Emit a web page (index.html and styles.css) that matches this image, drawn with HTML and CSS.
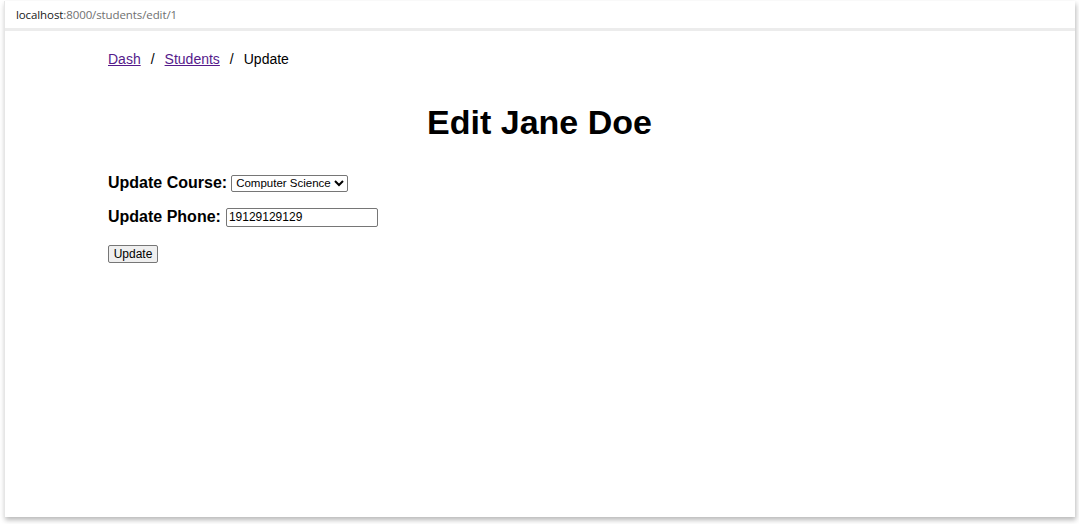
FILE: index.html
```html
<!DOCTYPE html>
<html>
<head>
<meta charset="utf-8">
<title>Edit Jane Doe</title>
<link rel="stylesheet" href="styles.css">
</head>
<body>
<div class="window">
  <div class="addressbar"><span class="host">localhost</span><span class="path">:8000/students/edit/1</span></div>
  <div class="page">
    <nav class="breadcrumb">
      <a href="#" class="crumb-link">Dash</a>
      <span class="sep">/</span>
      <a href="#" class="crumb-link">Students</a>
      <span class="sep">/</span>
      <span class="crumb-current">Update</span>
    </nav>
    <h1 class="title">Edit Jane Doe</h1>
    <form class="form">
      <div class="row"><label class="label" for="course">Update Course:</label> <select id="course" class="select"><option>Computer Science</option></select></div>
      <div class="row row-phone"><label class="label" for="phone">Update Phone:</label> <input id="phone" class="input" type="text" value="19129129129"></div>
      <div class="row row-btn"><button type="button" class="btn">Update</button></div>
    </form>
  </div>
</div>
</body>
</html>
```
FILE: styles.css
```css
html, body {
  margin: 0;
  padding: 0;
  background: #ffffff;
}
body {
  padding: 1px 4px 0 4px;
  height: 524px;
  box-sizing: border-box;
  font-family: "Liberation Sans", Arial, sans-serif;
}
.window {
  width: 1071px;
  height: 516px;
  background: #ffffff;
  box-shadow: 1px 3px 5px rgba(0, 0, 0, 0.28);
  border-left: 1px solid #e6e6e6;
  box-sizing: border-box;
  overflow: hidden;
}
.addressbar {
  height: 30px;
  box-sizing: border-box;
  padding: 7px 0 0 11px;
  font-family: "Open Sans", "Noto Sans", sans-serif;
  font-size: 11.5px;
  line-height: 14px;
  border-bottom: 3px solid #ececec;
  letter-spacing: -0.1px;
}
.host { color: #202020; }
.path { color: #707070; }
.page {
  padding: 20px 104px 0 103px;
}
.breadcrumb {
  display: flex;
  gap: 10px;
  font-size: 14px;
  line-height: 16px;
  color: #000;
}
.crumb-link { color: #551a8b; text-decoration: underline; }
.title {
  margin: 36px 0 0 0;
  text-align: center;
  font-size: 34px;
  line-height: 39px;
  font-weight: bold;
  color: #000;
}
.form {
  margin-top: 31px;
}
.row {
  height: 20px;
  display: flex;
  align-items: center;
  gap: 4px;
}
.row-phone { margin-top: 14px; gap: 5px; }
.row-btn { margin-top: 17px; }
.label {
  font-size: 16px;
  font-weight: bold;
  color: #000;
}
.select {
  font-family: "Liberation Sans", Arial, sans-serif;
  font-size: 11.5px;
  height: 17px;
  border: 1px solid #767676;
  border-radius: 2px;
  background: #fff;
  color: #000;
  padding: 0;
}
.input {
  font-family: "Liberation Sans", Arial, sans-serif;
  font-size: 12px;
  width: 152px;
  height: 19px;
  box-sizing: border-box;
  border: 1px solid #767676;
  border-radius: 2px;
  padding: 1px 2px;
  color: #000;
}
.btn {
  font-family: "Liberation Sans", Arial, sans-serif;
  font-size: 12px;
  width: 50px;
  height: 18px;
  padding: 0;
  border: 1px solid #767676;
  border-radius: 2px;
  background: #efefef;
  color: #000;
}
```
